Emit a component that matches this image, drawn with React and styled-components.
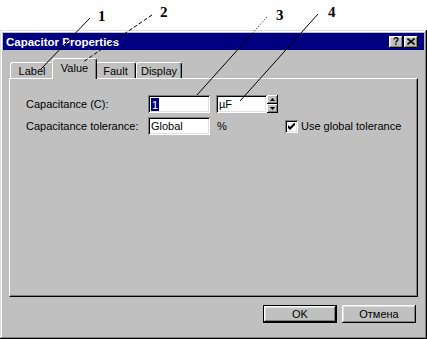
import React from 'react';
import styled, { createGlobalStyle } from 'styled-components';

const GlobalStyle = createGlobalStyle`
  html, body {
    margin: 0;
    padding: 0;
    background: #fff;
  }
  body {
    font-family: "Liberation Sans", Arial, sans-serif;
    font-size: 11px;
    color: #000;
  }
`;

// page + callouts
const Page = styled.div`
  position: relative;
  width: 427px;
  height: 339px;
  padding-top: 30px;
  box-sizing: border-box;
  overflow: hidden;
`;

const Callouts = styled.svg`
  position: absolute;
  left: 0;
  top: 0;
  width: 427px;
  height: 339px;
  pointer-events: none;
  z-index: 10;
`;

const Num = styled.span`
  position: absolute;
  left: ${(p) => p.$x}px;
  top: ${(p) => p.$y}px;
  font-family: "Liberation Serif", "Times New Roman", serif;
  font-weight: bold;
  font-size: 15px;
  line-height: 15px;
  z-index: 11;
`;

// dialog frame
const Dialog = styled.div`
  width: 427px;
  height: 309px;
  box-sizing: border-box;
  padding: 3px;
  background: #c0c0c0;
  box-shadow: inset -1px -1px #000, inset 1px 1px #dfdfdf,
    inset -2px -2px #808080, inset 2px 2px #fff;
  display: flex;
  flex-direction: column;
`;

const TitleBar = styled.div`
  height: 17px;
  background: #000080;
  color: #fff;
  font-weight: bold;
  font-size: 11.5px;
  display: flex;
  align-items: center;
  padding: 0 6px 0 3px;
`;

const TitleText = styled.span`
  flex: 1;
  white-space: nowrap;
`;

const TitleButton = styled.div`
  width: 14px;
  height: 12px;
  margin-left: 1px;
  box-sizing: border-box;
  background: #c0c0c0;
  color: #000;
  box-shadow: inset -1px -1px #000, inset 1px 1px #fff,
    inset -2px -2px #808080, inset 2px 2px #dfdfdf;
  display: flex;
  align-items: center;
  justify-content: center;
  font-size: 10px;
  font-weight: bold;
  line-height: 1;
`;

const Body = styled.div`
  flex: 1;
  padding: 8px 6px 0 6px;
  display: flex;
  flex-direction: column;
`;

// tabs
const TabStrip = styled.div`
  height: 20px;
  display: flex;
  align-items: flex-end;
  padding-left: 1px;
`;

const Tab = styled.div`
  position: relative;
  box-sizing: border-box;
  width: ${(p) => p.$w}px;
  height: ${(p) => (p.$active ? 21 : 16)}px;
  margin: ${(p) => (p.$active ? '0 -2px -1px' : '0')};
  padding-bottom: ${(p) => (p.$active ? 3 : 0)}px;
  z-index: ${(p) => (p.$active ? 2 : 1)};
  background: #c0c0c0;
  border-top: 1px solid #fff;
  border-left: 1px solid #fff;
  border-right: 1px solid #000;
  border-radius: 3px 3px 0 0;
  box-shadow: inset -1px 0 #808080;
  display: flex;
  align-items: center;
  justify-content: center;
  white-space: nowrap;
`;

const Panel = styled.div`
  box-sizing: border-box;
  height: 219px;
  background: #c0c0c0;
  border-top: 1px solid #fff;
  border-left: 1px solid #fff;
  border-right: 1px solid #000;
  border-bottom: 1px solid #000;
  box-shadow: inset -1px -1px #808080;
  padding: 16px 0 0 16px;
  display: flex;
  flex-direction: column;
  gap: 4px;
`;

// form
const Row = styled.div`
  display: flex;
  align-items: center;
  height: 18px;
`;

const Label = styled.span`
  width: 122px;
  white-space: nowrap;
`;

const Field = styled.div`
  width: ${(p) => p.$w}px;
  height: 18px;
  box-sizing: border-box;
  margin-left: ${(p) => p.$ml || 0}px;
  padding: 0 3px;
  background: #fff;
  box-shadow: inset 1px 1px #808080, inset -1px -1px #fff,
    inset 2px 2px #000, inset -2px -2px #dfdfdf;
  display: flex;
  align-items: center;
  white-space: nowrap;
`;

const Selected = styled.span`
  background: #000080;
  color: #fff;
  padding: 1px 1px 0;
`;

const Spinner = styled.div`
  width: 11px;
  height: 18px;
  display: flex;
  flex-direction: column;
`;

const SpinButton = styled.div`
  flex: 1;
  box-sizing: border-box;
  background: #c0c0c0;
  box-shadow: inset -1px -1px #000, inset 1px 1px #fff,
    inset -2px -2px #808080;
  display: flex;
  align-items: center;
  justify-content: center;
`;

const Percent = styled.span`
  width: 68px;
  margin-left: 7px;
`;

const CheckBox = styled.div`
  width: 13px;
  height: 13px;
  box-sizing: border-box;
  background: #fff;
  box-shadow: inset 1px 1px #808080, inset -1px -1px #fff,
    inset 2px 2px #000, inset -2px -2px #dfdfdf;
  display: flex;
  align-items: center;
  justify-content: center;
  margin-right: 3px;
`;

// bottom buttons
const ButtonRow = styled.div`
  display: flex;
  justify-content: flex-end;
  gap: 5px;
  margin-top: 8px;
  padding-right: 2px;
`;

const Button = styled.div`
  width: 74px;
  height: 18px;
  box-sizing: border-box;
  background: #c0c0c0;
  border: ${(p) => (p.$default ? '1px solid #000' : 'none')};
  box-shadow: inset -1px -1px #000, inset 1px 1px #fff,
    inset -2px -2px #808080, inset 2px 2px #dfdfdf;
  display: flex;
  align-items: center;
  justify-content: center;
`;

const Arrow = ({ up }) => (
  <svg width="5" height="3" viewBox="0 0 5 3">
    <polygon points={up ? '2.5,0 5,3 0,3' : '0,0 5,0 2.5,3'} fill="#000" />
  </svg>
);

const tabs = [
  { name: 'Label', w: 44 },
  { name: 'Value', w: 45, active: true },
  { name: 'Fault', w: 41 },
  { name: 'Display', w: 46 },
];

export default function App() {
  return (
    <Page>
      <GlobalStyle />

      <Callouts viewBox="0 0 427 339">
        <line x1="90" y1="18" x2="41" y2="69" stroke="#000" strokeWidth="1" />
        <line x1="152" y1="15" x2="83" y2="62" stroke="#000" strokeWidth="1" strokeDasharray="4 2" />
        <line x1="267" y1="17" x2="250" y2="36" stroke="#000" strokeWidth="1" strokeDasharray="1 2" />
        <line x1="250" y1="36" x2="197" y2="95" stroke="#000" strokeWidth="1" />
        <line x1="318" y1="14" x2="240" y2="101" stroke="#000" strokeWidth="1" />
      </Callouts>
      <Num $x={98} $y={9}>1</Num>
      <Num $x={160} $y={5}>2</Num>
      <Num $x={276} $y={8}>3</Num>
      <Num $x={328} $y={5}>4</Num>

      <Dialog>
        <TitleBar>
          <TitleText>Capacitor Properties</TitleText>
          <TitleButton>?</TitleButton>
          <TitleButton>
            <svg width="8" height="7" viewBox="0 0 8 7">
              <path d="M0.5 0.5 L7.5 6.5 M7.5 0.5 L0.5 6.5" stroke="#000" strokeWidth="1.6" />
            </svg>
          </TitleButton>
        </TitleBar>

        <Body>
          <TabStrip>
            {tabs.map((t) => (
              <Tab key={t.name} $w={t.w} $active={t.active}>
                {t.name}
              </Tab>
            ))}
          </TabStrip>

          <Panel>
            <Row>
              <Label>Capacitance (C):</Label>
              <Field $w={62}>
                <Selected>1</Selected>
              </Field>
              <Field $w={51} $ml={6}>µF</Field>
              <Spinner>
                <SpinButton><Arrow up /></SpinButton>
                <SpinButton><Arrow /></SpinButton>
              </Spinner>
            </Row>
            <Row>
              <Label>Capacitance tolerance:</Label>
              <Field $w={62}>Global</Field>
              <Percent>%</Percent>
              <CheckBox>
                <svg width="7" height="7" viewBox="0 0 7 7">
                  <polygon points="0,2 2,4 6,0 7,0 7,2 2,7 0,5" fill="#000" />
                </svg>
              </CheckBox>
              <span>Use global tolerance</span>
            </Row>
          </Panel>

          <ButtonRow>
            <Button $default>OK</Button>
            <Button>Отмена</Button>
          </ButtonRow>
        </Body>
      </Dialog>
    </Page>
  );
}
